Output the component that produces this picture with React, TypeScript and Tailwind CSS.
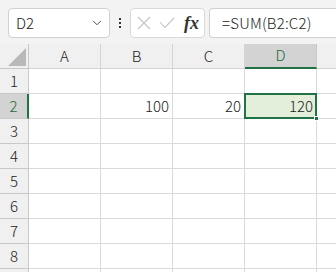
import { ChevronDown } from 'lucide-react';

const COLS = ['A', 'B', 'C', 'D', 'E'];
const ROWS = [1, 2, 3, 4, 5, 6, 7, 8, 9];

// row 2 values, keyed by column
const DATA: Record<string, string> = { B: '100', C: '20', D: '120' };

const font = { fontFamily: '"Noto Sans CJK JP", "Noto Sans", sans-serif' };

function Toolbar() {
  return (
    <div className="flex h-[44px] items-start bg-[#f3f3f3] pt-[8px] pl-[8px]">
      {/* Name box */}
      <div className="flex h-[30px] w-[102px] items-center justify-between rounded-[4px] border border-[#d1d1d1] bg-white pl-[7px] pr-[5px]">
        <span className="text-[15px] font-light text-[#222]">D2</span>
        <ChevronDown className="h-[14px] w-[14px] text-[#444]" strokeWidth={1.6} />
      </div>

      {/* More dots */}
      <div className="flex h-[30px] w-[20px] flex-col items-center justify-center gap-[2px]">
        <span className="h-[2px] w-[2px] bg-[#333]" />
        <span className="h-[2px] w-[2px] bg-[#333]" />
        <span className="h-[2px] w-[2px] bg-[#333]" />
      </div>

      {/* Cancel / enter / fx */}
      <div className="flex h-[30px] w-[75px] items-center rounded-[4px] border border-[#d9d9d9] bg-white">
        <svg width="14" height="14" viewBox="0 0 14 14" className="ml-[6px]">
          <path d="M1 1 L13 13 M13 1 L1 13" stroke="#c4c4c4" strokeWidth="1.1" fill="none" />
        </svg>
        <svg width="16" height="12" viewBox="0 0 16 12" className="ml-[8px]">
          <path d="M1 5 L6 10.5 L15 1" stroke="#c4c4c4" strokeWidth="1.1" fill="none" />
        </svg>
        <span
          className="ml-[9px] text-[18px] font-bold italic leading-none text-[#333]"
          style={{ fontFamily: '"Liberation Serif", serif' }}
        >
          fx
        </span>
      </div>

      {/* Formula bar */}
      <div className="ml-[4px] flex h-[30px] flex-1 items-center rounded-l-[4px] border border-r-0 border-[#d1d1d1] bg-white pl-[12px]">
        <span className="text-[15px] font-light tracking-[0.2px] text-[#222]">=SUM(B2:C2)</span>
      </div>
    </div>
  );
}

function Sheet() {
  return (
    <div className="grid grid-cols-[29px_72px_72px_72px_72px_40px] bg-white text-[15px] font-light text-[#222]">
      {/* header row */}
      <div className="relative h-[25px] border-r border-b border-[#c8c8c8] bg-[#f0f0f0]">
        <div
          className="absolute right-[2px] bottom-[2px] h-[18px] w-[18px] bg-[#b9b9b9]"
          style={{ clipPath: 'polygon(100% 0, 100% 100%, 0 100%)' }}
        />
      </div>
      {COLS.map((c) =>
        c === 'D' ? (
          <div
            key={c}
            className="flex h-[25px] items-center justify-center border-r border-b-2 border-r-[#c8c8c8] border-b-[#217346] bg-[#d3d3d3] text-[#1e6b3d]"
          >
            {c}
          </div>
        ) : (
          <div
            key={c}
            className="flex h-[25px] items-center justify-center border-r border-b border-[#d4d4d4] bg-[#f0f0f0]"
          >
            {/* column E sits mostly off screen, its label isn't visible */}
            {c === 'E' ? '' : c}
          </div>
        )
      )}

      {ROWS.map((r) => (
        <Row key={r} r={r} />
      ))}
    </div>
  );
}

function Row({ r }: { r: number }) {
  const active = r === 2;
  return (
    <>
      <div
        className={
          active
            ? 'flex h-[25px] items-center justify-center border-r-2 border-b border-r-[#217346] border-b-[#c8c8c8] bg-[#d3d3d3] text-[#1e6b3d]'
            : 'flex h-[25px] items-center justify-center border-r border-b border-[#c8c8c8] bg-[#f0f0f0]'
        }
      >
        {r < 9 ? r : ''}
      </div>
      {COLS.map((c) => {
        const value = active ? DATA[c] : undefined;
        if (active && c === 'D') {
          return (
            <div key={c} className="relative -mt-px -ml-px h-[26px] w-[73px]">
              <div className="flex h-full items-center justify-end border-2 border-[#217346] bg-[#e3efdb] pr-[2px]">
                {value}
              </div>
              <div className="absolute -right-[2px] -bottom-[2px] h-[5px] w-[5px] border border-white bg-[#217346]" />
            </div>
          );
        }
        return (
          <div
            key={c}
            className="flex h-[25px] items-center justify-end border-r border-b border-[#dadada] pr-[3px]"
          >
            {value}
          </div>
        );
      })}
    </>
  );
}

export default function App() {
  return (
    <div className="h-[272px] w-[336px] overflow-hidden bg-white" style={font}>
      <Toolbar />
      <Sheet />
    </div>
  );
}
